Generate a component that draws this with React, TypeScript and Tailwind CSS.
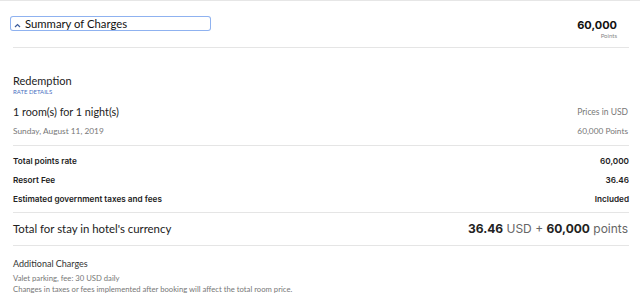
import React from "react";

const font = { fontFamily: "Lato, 'Noto Sans', sans-serif" };
const strong = { fontFamily: "Inter, 'Noto Sans', sans-serif" };

function Divider() {
  return <div className="h-px bg-[#e5e5e5]" />;
}

function FeeRow({ label, value }: { label: string; value: string }) {
  return (
    <div
      className="flex h-[19px] items-center justify-between text-[8.2px] font-semibold leading-none text-[#222]"
      style={strong}
    >
      <span>{label}</span>
      <span>{value}</span>
    </div>
  );
}

export default function App() {
  return (
    <div className="h-[300px] w-[640px] overflow-hidden bg-white" style={font}>
      <div className="h-px bg-[#e6e6e6]" />
      <div className="pl-[13px] pr-[11px]">
        {/* header */}
        <div className="flex h-[46px] items-start justify-between">
          <div className="mt-[16px] ml-[-2px] flex h-[13px] w-[199px] items-center gap-[4px] rounded-[2px] pl-[3px] text-[11.3px] leading-none text-[#111] ring-1 ring-[#8fb2f0]">
            <svg width="7" height="5" viewBox="0 0 7 5" className="mt-[4px]">
              <path d="M1 4 L3.5 1.5 L6 4" fill="none" stroke="#3b5b9a" strokeWidth="1.2" />
            </svg>
            <span>Summary of Charges</span>
          </div>
          <div className="mt-[17px] mr-[12px] flex flex-col items-end">
            <span className="text-[11px] font-bold leading-[14px] text-[#111]" style={strong}>
              60,000
            </span>
            <span className="text-[6px] leading-[8px] text-[#888]">Points</span>
          </div>
        </div>
        <Divider />

        {/* redemption */}
        <div className="pt-[26px]">
          <div className="text-[11px] leading-[14px] text-[#222]">Redemption</div>
          <div className="text-[6px] leading-[8px] text-[#4a6fc1]">RATE DETAILS</div>
          <div className="mt-[9px] flex items-center justify-between">
            <span className="text-[10.8px] leading-[14px] text-[#222]">1 room(s) for 1 night(s)</span>
            <span className="mr-[1px] text-[8.5px] text-[#777]">Prices in USD</span>
          </div>
          <div className="mt-[5px] flex h-[14px] items-center justify-between text-[8.3px] text-[#777]">
            <span>Sunday, August 11, 2019</span>
            <span className="mr-[1px]">60,000 Points</span>
          </div>
        </div>
        <div className="mt-[7px]">
          <Divider />
        </div>

        {/* fees */}
        <div className="pt-[6px] pb-[3px]">
          <FeeRow label="Total points rate" value="60,000" />
          <FeeRow label="Resort Fee" value="36.46" />
          <FeeRow label="Estimated government taxes and fees" value="Included" />
        </div>
        <Divider />

        {/* total */}
        <div className="flex h-[32px] items-center justify-between text-[11.4px] text-[#222]">
          <span>Total for stay in hotel's currency</span>
          <span className="mr-[1px] text-[12px]" style={strong}>
            <b className="font-bold">36.46</b> <span className="text-[#666]">USD +</span>{" "}
            <b className="font-bold">60,000</b> <span className="text-[#666]">points</span>
          </span>
        </div>
        <Divider />

        {/* additional */}
        <div className="pt-[12px]">
          <div className="text-[9px] leading-[11px] text-[#333]">Additional Charges</div>
          <div className="mt-[4px] text-[7.7px] leading-[11px] text-[#777]">
            <div>Valet parking, fee: 30 USD daily</div>
            <div>Changes in taxes or fees implemented after booking will affect the total room price.</div>
          </div>
        </div>
      </div>
    </div>
  );
}
